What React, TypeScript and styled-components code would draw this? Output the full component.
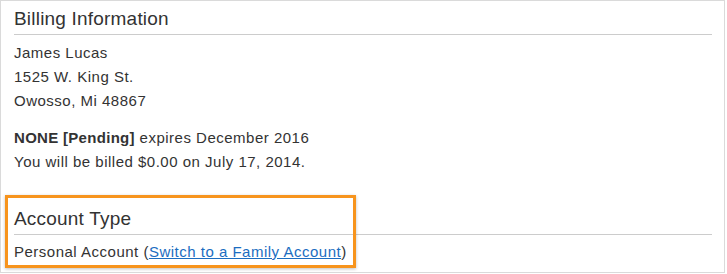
import styled, { createGlobalStyle } from "styled-components";

const GlobalStyle = createGlobalStyle`
  html, body {
    margin: 0;
    padding: 0;
    background: #ffffff;
  }
  body {
    font-family: "Liberation Sans", Arial, sans-serif;
    color: #333333;
  }
`;

const Panel = styled.div`
  position: relative;
  box-sizing: border-box;
  width: 725px;
  height: 273px;
  border: 1px solid #dadada;
  padding: 6px 12px 0 13px;
  background: #ffffff;
`;

const Section = styled.section`
  display: flex;
  flex-direction: column;
`;

const Heading = styled.h2`
  margin: 0;
  padding-bottom: 4px;
  border-bottom: 1px solid #cccccc;
  font-size: 19px;
  line-height: 23px;
  font-weight: 400;
  letter-spacing: 0.2px;
  color: #333333;
`;

const Body = styled.div<{ $gap: number }>`
  display: flex;
  flex-direction: column;
  gap: 13px;
  margin-top: ${(p) => p.$gap}px;
`;

const Para = styled.p`
  margin: 0;
  font-size: 15px;
  line-height: 24px;
  letter-spacing: 0.5px;
`;

const Strong = styled.strong`
  font-weight: 700;
  letter-spacing: 0.3px;
`;

const Link = styled.a`
  color: #1b6dc1;
  text-decoration: underline;
`;

const Spacer = styled.div`
  height: 33px;
`;

const Highlight = styled.div`
  position: absolute;
  left: 4px;
  top: 194px;
  width: 351px;
  height: 73px;
  box-sizing: border-box;
  border: 3px solid #f7941d;
  box-shadow: 0 1px 3px rgba(0, 0, 0, 0.25);
  pointer-events: none;
`;

export default function App() {
  return (
    <>
      <GlobalStyle />
      <Panel>
        <Section>
          <Heading>Billing Information</Heading>
          <Body $gap={6}>
            <Para>
              James Lucas
              <br />
              1525 W. King St.
              <br />
              Owosso, Mi 48867
            </Para>
            <Para>
              <Strong>NONE [Pending]</Strong> expires December 2016
              <br />
              You will be billed $0.00 on July 17, 2014.
            </Para>
          </Body>
        </Section>
        <Spacer />
        <Section>
          <Heading>Account Type</Heading>
          <Body $gap={5}>
            <Para>
              Personal Account (<Link href="#">Switch to a Family Account</Link>)
            </Para>
          </Body>
        </Section>
        <Highlight />
      </Panel>
    </>
  );
}
